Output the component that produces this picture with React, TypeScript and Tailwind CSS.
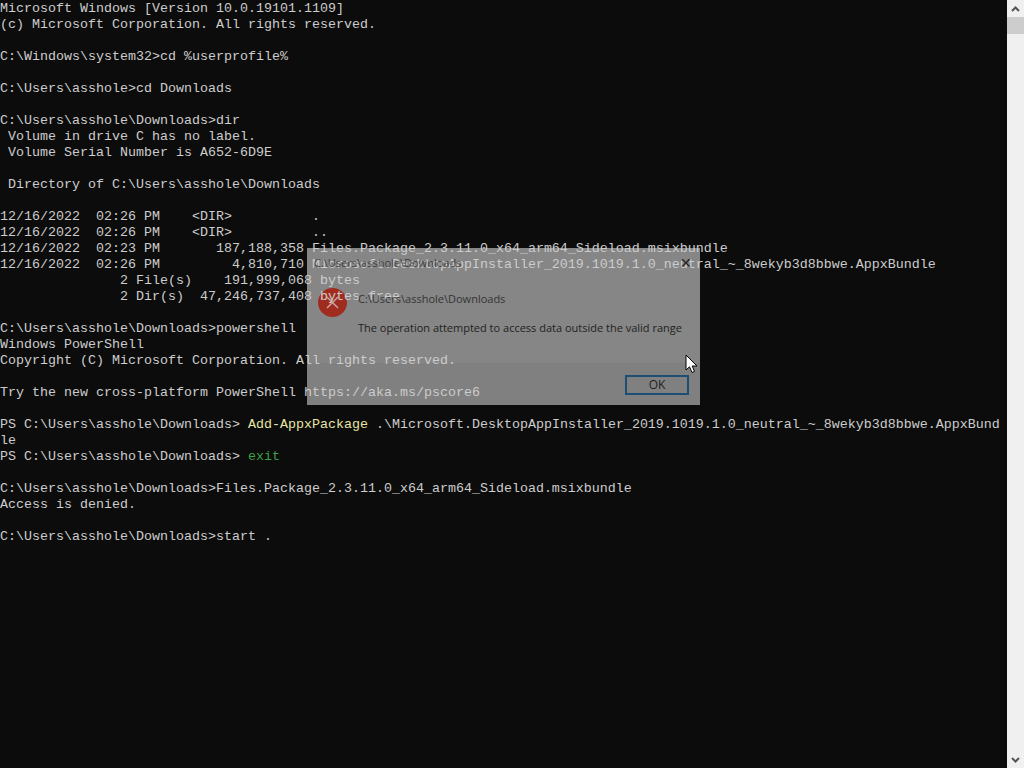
import * as React from 'react';

const cmdColor = "text-[#e6e6a6]";
const exitColor = "text-[#3f9f45]";

const consoleLines: React.ReactNode[] = [
    "Microsoft Windows [Version 10.0.19101.1109]",
    "(c) Microsoft Corporation. All rights reserved.",
    "",
    "C:\\Windows\\system32>cd %userprofile%",
    "",
    "C:\\Users\\asshole>cd Downloads",
    "",
    "C:\\Users\\asshole\\Downloads>dir",
    " Volume in drive C has no label.",
    " Volume Serial Number is A652-6D9E",
    "",
    " Directory of C:\\Users\\asshole\\Downloads",
    "",
    "12/16/2022  02:26 PM    <DIR>          .",
    "12/16/2022  02:26 PM    <DIR>          ..",
    "12/16/2022  02:23 PM       187,188,358 Files.Package_2.3.11.0_x64_arm64_Sideload.msixbundle",
    "12/16/2022  02:26 PM         4,810,710 Microsoft.DesktopAppInstaller_2019.1019.1.0_neutral_~_8wekyb3d8bbwe.AppxBundle",
    "               2 File(s)    191,999,068 bytes",
    "               2 Dir(s)  47,246,737,408 bytes free",
    "",
    "C:\\Users\\asshole\\Downloads>powershell",
    "Windows PowerShell",
    "Copyright (C) Microsoft Corporation. All rights reserved.",
    "",
    "Try the new cross-platform PowerShell https://aka.ms/pscore6",
    "",
    <>PS C:\Users\asshole\Downloads&gt; <span className={cmdColor}>Add-AppxPackage</span> .\Microsoft.DesktopAppInstaller_2019.1019.1.0_neutral_~_8wekyb3d8bbwe.AppxBund</>,
    "le",
    <>PS C:\Users\asshole\Downloads&gt; <span className={exitColor}>exit</span></>,
    "",
    "C:\\Users\\asshole\\Downloads>Files.Package_2.3.11.0_x64_arm64_Sideload.msixbundle",
    "Access is denied.",
    "",
    "C:\\Users\\asshole\\Downloads>start .",
];

// the dialog is caught mid-fade, so the console text sits between its panel and its content
function ErrorDialogPanel() {
    return <div className="absolute left-[307px] top-[248px] w-[393px] h-[157px] flex flex-col bg-[#868686]">
        <div className="h-[115px] pl-[11px] pt-[40px]">
            <div className="w-[29px] h-[29px] rounded-full bg-[#a02c20] flex items-center justify-center">
                <svg width="15" height="15" viewBox="0 0 15 15"><path d="M2 2L13 13M13 2L2 13" stroke="#c9a29c" strokeWidth="1.5" /></svg>
            </div>
        </div>
        <div className="grow-[1] bg-[#808080]"></div>
    </div>;
}

function ErrorDialogContent() {
    return <div className="absolute left-[307px] top-[248px] w-[393px] h-[157px] flex flex-col text-[#222222] font-['Open_Sans',sans-serif]">
        <div className="flex flex-row items-center justify-between pl-[7px] pr-[8px] pt-[7px] text-[11px] leading-[16px]">
            <span className="opacity-70">C:\Users\asshole\Downloads</span>
            <span className="text-[14px] leading-none">✕</span>
        </div>
        <div className="flex flex-col pl-[51px] pt-[20px] h-[92px] text-[11px] leading-[16px]">
            <span className="opacity-80">C:\Users\asshole\Downloads</span>
            <span className="mt-[13px]">The operation attempted to access data outside the valid range</span>
        </div>
        <div className="grow-[1] flex flex-row justify-end pr-[11px] pt-[12px]">
            <div className="w-[64px] h-[20px] border-2 border-[#1d4f75] flex items-center justify-center text-[12px]">OK</div>
        </div>
    </div>;
}

function Scrollbar() {
    return <div className="w-[17px] h-full bg-[#f0f0f0] flex flex-col items-center shrink-0">
        <svg className="mt-[6px]" width="9" height="6" viewBox="0 0 9 6"><path d="M1 5L4.5 1.5L8 5" stroke="#555" strokeWidth="2" fill="none" /></svg>
        <div className="w-full h-[17px] mt-[5px] bg-[#cdcdcd]"></div>
        <svg className="mt-auto mb-[5px]" width="9" height="6" viewBox="0 0 9 6"><path d="M1 1L4.5 4.5L8 1" stroke="#555" strokeWidth="2" fill="none" /></svg>
    </div>;
}

export default function App() {
    return <div className="relative w-[1024px] h-[768px] overflow-hidden bg-[#0c0c0c] flex flex-row">
        <ErrorDialogPanel />
        <div className="relative grow-[1] pt-[1px] text-[#cccccc] font-['Liberation_Mono',monospace] text-[13.33px] leading-[16px] whitespace-pre">
            {consoleLines.map((a, i) => <div key={i} className="h-[16px]">{a}</div>)}
        </div>
        <Scrollbar />
        <ErrorDialogContent />
        <svg className="absolute left-[685px] top-[354px]" width="13" height="20" viewBox="0 0 13 20">
            <path d="M1 1V16L4.5 12.8L7 18.5L9.5 17.4L7.2 12H12Z" fill="#fff" stroke="#000" strokeWidth="1" />
        </svg>
    </div>;
}
